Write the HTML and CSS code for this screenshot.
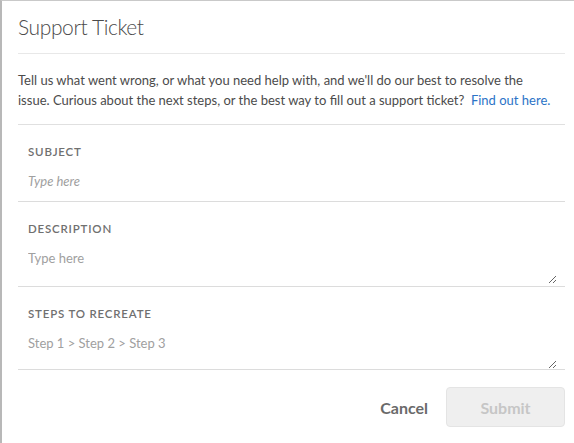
FILE: index.html
```html
<!DOCTYPE html>
<html lang="en">
<head>
<meta charset="utf-8">
<title>Support Ticket</title>
<link rel="stylesheet" href="styles.css">
</head>
<body>
<div class="modal">
  <h1 class="title">Support Ticket</h1>
  <p class="intro">Tell us what went wrong, or what you need help with, and we'll do our best to resolve the<br>issue. Curious about the next steps, or the best way to fill out a support ticket?&nbsp; <a class="link" href="#">Find out here.</a></p>
  <form class="form">
    <div class="field field-subject">
      <label class="label" for="subject">Subject</label>
      <input class="input" id="subject" type="text" placeholder="Type here">
    </div>
    <div class="field">
      <label class="label" for="desc">Description</label>
      <textarea class="area" id="desc" placeholder="Type here"></textarea>
    </div>
    <div class="field field-last">
      <label class="label" for="steps">Steps to recreate</label>
      <textarea class="area" id="steps" placeholder="Step 1 &gt; Step 2 &gt; Step 3"></textarea>
    </div>
    <div class="footer">
      <button type="button" class="btn-cancel">Cancel</button>
      <button type="button" class="btn-submit" disabled>Submit</button>
    </div>
  </form>
</div>
</body>
</html>
```
FILE: styles.css
```css
* { box-sizing: border-box; }
html, body { margin: 0; padding: 0; background: #fff; }
body {
  font-family: Lato, "Open Sans", "Liberation Sans", sans-serif;
  color: #4b4b4b;
  width: 574px;
  height: 443px;
  overflow: hidden;
}
.modal {
  height: 443px;
  border-left: 2px solid #b8b8b8;
  border-top: 1px solid #c9c9c9;
  padding: 0 9px 0 16px;
}
.title {
  margin: 0;
  padding: 14px 0 14px;
  font-size: 21px;
  line-height: 24px;
  font-weight: 300;
  letter-spacing: -0.4px;
  color: #4b4b4b;
  border-bottom: 1px solid #e8e8e8;
}
.intro {
  margin: 0;
  padding: 16px 0 14px;
  font-size: 13px;
  line-height: 20px;
  white-space: nowrap;
  color: #4b4b4b;
}
.link { color: #2b73c7; text-decoration: none; }
.form {
  margin: 0;
  border-top: 1px solid #e0e0e0;
  display: flex;
  flex-direction: column;
}
.field {
  display: flex;
  flex-direction: column;
  gap: 12px;
  padding: 20px 0 0 10px;
  border-bottom: 1px solid #dcdcdc;
}
.field-subject { padding-bottom: 10px; }
.label {
  font-size: 11.5px;
  line-height: 14px;
  font-weight: 600;
  letter-spacing: 0.07em;
  text-transform: uppercase;
  color: #707070;
}
.input, .area {
  font-family: inherit;
  font-size: 13px;
  line-height: 20px;
  color: #4b4b4b;
  border: 0;
  outline: 0;
  padding: 0;
  margin: 0;
  background: transparent;
}
.input { height: 20px; }
.input::placeholder { font-style: italic; color: #a0a0a0; }
.area {
  height: 36px;
  margin: 0 8px 2px 0;
  resize: vertical;
}
.field-last .area { margin-bottom: 0; }
.area::placeholder { color: #a0a0a0; }
.footer {
  display: flex;
  justify-content: flex-end;
  align-items: center;
  gap: 18px;
  padding-top: 17px;
}
.btn-cancel {
  font-family: inherit;
  font-size: 16px;
  font-weight: 700;
  color: #6a6a6a;
  background: none;
  border: 0;
  padding: 0;
}
.btn-submit {
  font-family: inherit;
  font-size: 16px;
  font-weight: 700;
  color: #c6c6c6;
  background: #efefef;
  border: 1px solid #e4e4e4;
  border-radius: 4px;
  width: 119px;
  height: 40px;
  padding: 0;
}
```
